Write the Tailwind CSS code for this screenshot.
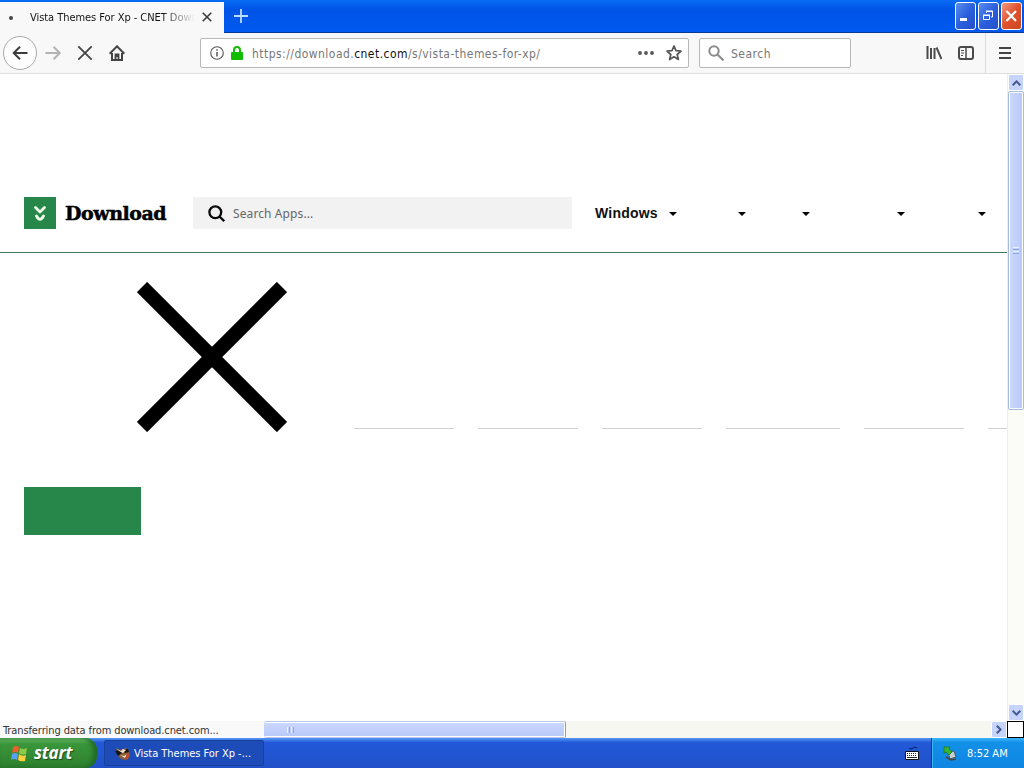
<!DOCTYPE html>
<html lang="en">
<head>
	<meta charset="UTF-8">
	<meta name="viewport" content="width=device-width, initial-scale=1.0">
	<title>Vista Themes For Xp - CNET Download</title>
	<script src="https://cdn.jsdelivr.net/npm/@tailwindcss/browser@4"></script>
</head>
<body class="bg-white overflow-hidden font-['DejaVu_Sans_Condensed','DejaVu_Sans',sans-serif]">
	<div class="w-[1024px] h-[768px] flex flex-col overflow-hidden">
		<!-- Tab strip -->
		<div class="h-[33px] shrink-0 flex bg-linear-to-b from-[#0a6cf5] via-[#0054e6] via-30% to-[#0059f0] border-b border-[#0b3a94]">
			<div class="w-[224px] h-[31px] mt-[2px] bg-[#f8f8f8] flex items-center">
				<span class="w-1 h-1 ml-[9px] rounded-full bg-[#444]"></span>
				<span class="ml-[17px] pt-px w-[165px] overflow-hidden whitespace-nowrap text-[11px] tracking-[-0.05px] bg-linear-to-r from-[#111] from-80% to-transparent bg-clip-text text-transparent">Vista Themes For Xp - CNET Download</span>
				<svg class="ml-[7px] -mt-px w-[10px] h-[10px]" viewBox="0 0 10 10" stroke="#3c3c3c" stroke-width="1.6"><path d="M.7.7l8.6 8.6M9.300.7L.7 9.300"/></svg>
			</div>
			<svg class="ml-[10px] mt-[9px] w-[14px] h-[14px]" viewBox="0 0 14 14" stroke="#bfdcff" stroke-width="1.8"><path d="M7 0v14M0 7h14"/></svg>
			<!-- Window buttons -->
			<div class="ml-auto mr-[2px] mt-[2px] flex gap-[2px]">
				<div class="w-[21px] h-[28px] rounded-[3px] border border-white bg-linear-to-br from-[#5b8df0] via-[#2b5fdc] to-[#2450cc]">
					<svg class="w-full h-full" viewBox="0 0 19 26"><path d="M4 15h7v3H4z" fill="#fff"/></svg>
				</div>
				<div class="w-[21px] h-[28px] rounded-[3px] border border-white bg-linear-to-br from-[#5b8df0] via-[#2b5fdc] to-[#2450cc]">
					<svg class="w-full h-full" viewBox="0 0 19 26" fill="none" stroke="#fff"><path d="M7.500 10V8.500h6v5.500H12M4.500 12.500h6v4h-6zM7 8h7M4 12h7"/></svg>
				</div>
				<div class="w-[21px] h-[28px] rounded-[3px] border border-white bg-linear-to-br from-[#f0987c] via-[#e0502c] to-[#c94a22]">
					<svg class="w-full h-full" viewBox="0 0 19 26" stroke="#fff" stroke-width="2.200"><path d="M4.500 8l9.500 10M14 8L4.500 18"/></svg>
				</div>
			</div>
		</div>

		<!-- Toolbar -->
		<div class="h-[41px] shrink-0 flex items-center bg-[#f8f8f8] border-b border-[#dedede]">
			<div class="ml-[3px] w-[34px] h-[34px] rounded-full border border-[#a9a9a9] bg-[#fdfdfd] flex items-center justify-center">
				<svg class="w-4 h-4" viewBox="0 0 16 16" fill="none" stroke="#3c3c3c" stroke-width="2"><path d="M15.500 8H2M8 1.700L1.700 8 8 14.300"/></svg>
			</div>
			<svg class="ml-2 w-4 h-4" viewBox="0 0 16 16" fill="none" stroke="#b4b4b4" stroke-width="2"><path d="M.5 8H14M8.500 1.700L14.800 8l-6.300 6.300"/></svg>
			<svg class="ml-4 w-4 h-4" viewBox="0 0 16 16" fill="none" stroke="#444" stroke-width="1.800"><path d="M1.300 1.300l13.400 13.400M14.700 1.300L1.300 14.700"/></svg>
			<svg class="ml-4 w-4 h-4" viewBox="0 0 16 16" fill="none" stroke="#444" stroke-width="2"><path d="M.6 8.700L8 1.300l7.400 7.400"/><path d="M3 8v7h10V8"/><path d="M6.500 15V9.500h3V15M8 9v3" stroke-width="1.800"/></svg>
			<!-- Address bar -->
			<div class="ml-[75px] w-[489px] h-[30px] bg-white border border-[#b8b8b8] rounded-xs flex items-center">
				<svg class="ml-[9px] w-[14px] h-[14px]" viewBox="0 0 14 14" fill="none" stroke="#555"><circle cx="7" cy="7" r="6.300" stroke-width="1.100"/><path d="M7 6v4.500M7 3.300v1.500" stroke-width="1.500"/></svg>
				<svg class="ml-[7px] w-3 h-[14px]" viewBox="0 0 12 14"><path d="M3 7V4a3 3 0 0 1 6 0v3" fill="none" stroke="#12bc00" stroke-width="2"/><rect y="6" width="12" height="8" rx="1" fill="#12bc00"/></svg>
				<span class="ml-[9px] pt-px text-[12px] tracking-[0.46px] text-[#777] whitespace-nowrap">https://download.<span class="text-[#111]">cnet.com</span>/s/vista-themes-for-xp/</span>
				<svg class="ml-auto w-4 h-4" viewBox="0 0 16 16" fill="#555"><circle cx="2" cy="8" r="1.900"/><circle cx="8" cy="8" r="1.900"/><circle cx="14" cy="8" r="1.900"/></svg>
				<svg class="ml-3 mr-[6px] w-4 h-4" viewBox="0 0 16 16" fill="none" stroke="#555" stroke-width="1.700" stroke-linejoin="round"><path d="M8 1l2 4.700 5 .4-3.800 3.400 1.200 5L8 11.800l-4.400 2.700 1.200-5L1 6.100l5-.4z"/></svg>
			</div>
			<!-- Search box -->
			<div class="ml-[10px] w-[152px] h-[30px] bg-white border border-[#b8b8b8] rounded-xs flex items-center">
				<svg class="ml-2 w-4 h-4" viewBox="0 0 16 16" fill="none" stroke="#8a8a8a" stroke-width="2"><circle cx="6" cy="6" r="4.700"/><path d="M9.500 9.500l6 6"/></svg>
				<span class="ml-[7px] pt-px text-[12px] tracking-[0.5px] text-[#777]">Search</span>
			</div>
			<svg class="ml-[75px] w-4 h-4" viewBox="0 0 16 16" stroke="#4a4a4a" stroke-width="2"><path d="M1.500 1v13M5 3v11M8.500 3v11M10.500 2.500l5 11.500"/></svg>
			<svg class="ml-4 w-4 h-4" viewBox="0 0 16 16" fill="none" stroke="#4a4a4a" stroke-width="2"><rect x="1" y="2" width="14" height="12" rx="2"/><path d="M8 2v12" stroke-width="1.500"/><path d="M3 5.500h3M3 8h3M3 10.500h2" stroke-width="1"/></svg>
			<div class="ml-[11px] w-px h-full bg-[#dcdcdc]"></div>
			<svg class="ml-[13px] w-3 h-[14px]" viewBox="0 0 12 14" stroke="#444" stroke-width="2"><path d="M0 2h12M0 7h12M0 12h12"/></svg>
		</div>

		<div class="flex-1 min-h-0 flex">
			<!-- Page -->
			<main class="w-[1007px] bg-white overflow-hidden">
				<header class="h-[179px] pt-[122px] border-b border-[#3f765a] flex items-start">
					<div class="ml-6 mt-px w-8 h-8 bg-[#27874b]">
						<svg class="w-8 h-8" viewBox="0 0 32 32" fill="none" stroke="#effbe8" stroke-width="2.800" stroke-linecap="round" stroke-linejoin="round"><path d="M11.500 10.500l4.500 4.500 4.500-4.500M12.500 19q3.500 6.500 7 0"/></svg>
					</div>
					<div class="w-[128px] pl-[9px] mt-[1px] h-8 flex items-center font-['DejaVu_Serif',serif] font-bold text-[19px] tracking-[-0.45px] text-black [-webkit-text-stroke:0.5px_#000]">Download</div>
					<div class="mt-px w-[379px] h-8 bg-[#f2f2f2] flex items-center ml-[9px]">
						<svg class="ml-[15px] w-[17px] h-[17px]" viewBox="0 0 17 17" fill="none" stroke="#0a0a0a" stroke-width="2.300"><circle cx="7.300" cy="7.300" r="5.900"/><path d="M11.500 11.500l4.700 4.700"/></svg>
						<span class="ml-2 pt-px font-['Noto_Sans',sans-serif] text-[12px] tracking-[0.1px] text-[#666]">Search Apps...</span>
					</div>
					<nav class="ml-[23px] mt-[2px] h-8 flex items-center font-['Liberation_Sans',sans-serif] font-bold text-[14px] tracking-[0.2px] text-[#111]">
						<span class="w-[74px] -mt-px">Windows</span>
						<svg class="w-2 h-1" viewBox="0 0 8 4"><path d="M0 0h8L4 4z"/></svg>
						<svg class="ml-[61px] w-2 h-1" viewBox="0 0 8 4"><path d="M0 0h8L4 4z"/></svg>
						<svg class="ml-[56px] w-2 h-1" viewBox="0 0 8 4"><path d="M0 0h8L4 4z"/></svg>
						<svg class="ml-[87px] w-2 h-1" viewBox="0 0 8 4"><path d="M0 0h8L4 4z"/></svg>
						<svg class="ml-[73px] w-2 h-1" viewBox="0 0 8 4"><path d="M0 0h8L4 4z"/></svg>
					</nav>
				</header>
				<div class="h-[176px] pt-[29px] flex">
					<svg class="ml-[137px] w-[150px] h-[150px] shrink-0" viewBox="0 0 150 150" stroke="#000" stroke-width="14.500"><path d="M5 5l140 140M145 5L5 145"/></svg>
					<div class="ml-[67px] h-[147px] flex gap-6 items-end">
						<div class="w-[100px] h-px bg-[#d0d0d0] shrink-0"></div>
						<div class="w-[100px] h-px bg-[#d0d0d0] shrink-0"></div>
						<div class="w-[100px] h-px bg-[#d0d0d0] shrink-0"></div>
						<div class="w-[114px] h-px bg-[#d0d0d0] shrink-0"></div>
						<div class="w-[100px] h-px bg-[#d0d0d0] shrink-0"></div>
						<div class="w-[100px] h-px bg-[#d0d0d0] shrink-0"></div>
					</div>
				</div>
				<div class="mt-[58px] ml-6 w-[117px] h-12 bg-[#27874b]"></div>
			</main>

			<!-- Vertical scrollbar -->
			<div class="w-[17px] bg-[#fbfbf8] border-l border-[#eeeee6] flex flex-col">
				<div class="h-[17px] rounded-xs border border-white bg-[#c6d3fb] flex items-center justify-center">
					<svg class="w-[9px] h-[6px]" viewBox="0 0 9 6" fill="none" stroke="#44598f" stroke-width="2"><path d="M.7 5.200l3.800-3.800 3.800 3.800"/></svg>
				</div>
				<div class="h-[319px] rounded-xs border border-[#a5bbd8] p-px bg-white">
					<div class="h-full bg-linear-to-r from-[#cad7fe] to-[#b9c9f8] flex flex-col items-center justify-center gap-px">
						<div class="w-[6px] h-px bg-[#edf3ff]"></div>
						<div class="w-[6px] h-px bg-[#8ca6e2]"></div>
						<div class="w-[6px] h-px bg-[#edf3ff]"></div>
						<div class="w-[6px] h-px bg-[#8ca6e2]"></div>
					</div>
				</div>
				<div class="mt-auto h-[17px] rounded-xs border border-white bg-[#c6d3fb] flex items-center justify-center">
					<svg class="w-[9px] h-[6px]" viewBox="0 0 9 6" fill="none" stroke="#44598f" stroke-width="2"><path d="M.7.8l3.800 3.800L8.300.8"/></svg>
				</div>
			</div>
		</div>

		<!-- Status text and horizontal scrollbar -->
		<div class="h-[17px] shrink-0 flex bg-[#f7f7f2]">
			<div class="w-[264px] pl-[3px] bg-[#f9f9f9] text-[11px] tracking-[-0.1px] leading-[19px] text-[#333] whitespace-nowrap">Transferring data from download.cnet.com...</div>
			<div class="w-[302px] rounded-xs border-y border-r border-r-[#8d9cb8] border-y-[#b5c6ea] py-px pr-px bg-white">
				<div class="h-full bg-linear-to-b from-[#cad7fe] to-[#b9c9f8] flex items-center pl-[23px] gap-px">
					<div class="w-px h-[6px] bg-[#edf3ff]"></div>
					<div class="w-px h-[6px] bg-[#8ca6e2]"></div>
					<div class="w-px h-[6px] bg-[#edf3ff]"></div>
					<div class="w-px h-[6px] bg-[#8ca6e2]"></div>
				</div>
			</div>
			<div class="ml-auto w-[16px] border border-white rounded-xs bg-[#c6d3fb] flex items-center justify-center">
				<svg class="w-[6px] h-[9px]" viewBox="0 0 6 9" fill="none" stroke="#44598f" stroke-width="2"><path d="M.8.7l3.800 3.800L.8 8.300"/></svg>
			</div>
			<div class="w-[17px] border border-black bg-white"></div>
		</div>

		<!-- Taskbar -->
		<div class="h-[30px] shrink-0 flex bg-linear-to-b from-[#5797f4] via-[#2359d9] via-15% to-[#1f50c8]">
			<div class="w-[97px] rounded-r-xl bg-linear-to-b from-[#6fc06f] via-[#3a963a] via-20% to-[#2d802d] shadow-[inset_-4px_0_5px_#1f6a25] flex items-center">
				<svg class="ml-[11px] w-[17px] h-[17px]" viewBox="0 0 17 17"><path d="M2 2q3-2 6 0L7 8Q4 6 1 8z" fill="#e9622c"/><path d="M9 3q3 2 7 0l-1 6q-4 2-7-1z" fill="#8ccb49"/><path d="M1 9q3-2 6 0l-1 6q-3-2-6 0z" fill="#5aa0f4"/><path d="M8 9q3 3 7 1l-1 6q-4 1-7-1z" fill="#fbd03c"/></svg>
				<span class="ml-[6px] -mt-px font-['Open_Sans','DejaVu_Sans',sans-serif] italic font-bold text-[17px] tracking-[-0.2px] text-white [text-shadow:1px_1px_1px_#1c4d1c]">start</span>
			</div>
			<div class="ml-[7px] mt-[2px] w-[160px] h-[26px] rounded-xs border border-[#17409c] bg-[#1d4cb9] flex items-center">
				<svg class="ml-[10px] w-4 h-4" viewBox="0 0 16 16"><path d="M1 3l4 2 6-2 3 3 1 5-4 4-5-1-3-3z" fill="#8a5d35"/><path d="M0 6l4-1 3 3-4 3zM8 5l5-1 1 3-4 1z" fill="#151515"/><path d="M2 4l4 2 2-2 3 1-3 3-4-2zM5 10l4 1 3-2-2 4z" fill="#efe1c7"/><path d="M12 8l3 1-2 5-3 1z" fill="#b94c28"/></svg>
				<span class="ml-[3px] pt-[2px] text-[11px] tracking-[-0.03px] text-white whitespace-nowrap">Vista Themes For Xp -...</span>
			</div>
			<svg class="ml-auto mt-2 w-[14px] h-[14px]" viewBox="0 0 14 14"><path d="M4 2q2 2 4 0t4 0" stroke="#0b1f55" fill="none"/><path d="M.5 5.500h13v8H.5z" fill="#fff" stroke="#111"/><path d="M2 7.500h10M2 9.500h10" stroke="#222" stroke-dasharray="1 1"/><path d="M2 11.500h10" stroke="#222"/></svg>
			<div class="ml-[12px] w-[93px] border-l border-[#0b3a94] bg-linear-to-b from-[#3bb5f5] via-[#1290e8] via-15% to-[#0f86e2] shadow-[inset_1px_0_0_#39b8f4] flex items-center">
				<svg class="ml-[11px] w-[14px] h-[15px]" viewBox="0 0 14 15"><path d="M5 6l6-1 2 6-6 2z" fill="#c9ced2" stroke="#4a5665"/><path d="M1 1l6 0-1 2 3 3-3 3-3-3-2 1z" fill="#37b534" stroke="#18741b" stroke-width=".7"/><path d="M3 11l5 3 5-1" stroke="#49443c" stroke-width="1.500" fill="none"/></svg>
				<span class="ml-[10px] pt-[2px] text-[11px] text-white whitespace-nowrap">8:52 AM</span>
			</div>
		</div>
	</div>
</body>
</html>
